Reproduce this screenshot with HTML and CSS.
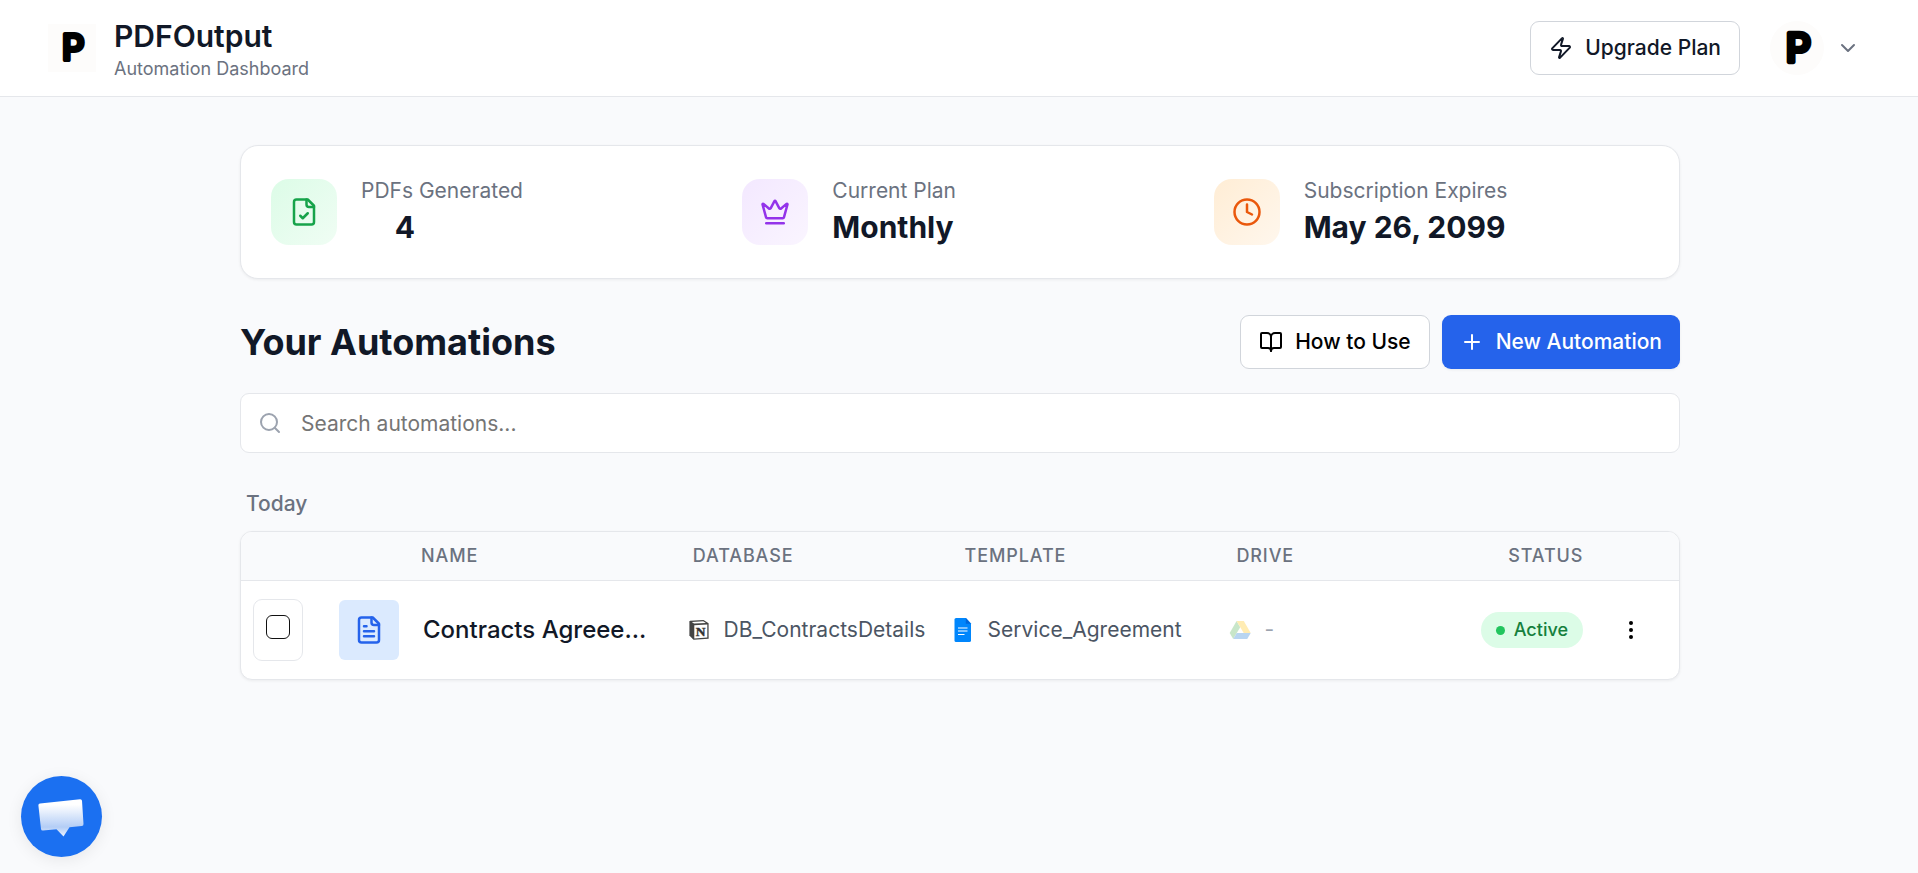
FILE: index.html
```html
<!DOCTYPE html>
<html lang="en">

<head>
    <meta charset="UTF-8">
    <meta name="viewport" content="width=device-width, initial-scale=1.0">
    <title>PDFOutput - Automation Dashboard</title>
    <link rel="stylesheet" href="styles.css">
</head>

<body>
    <header class="header">
        <div class="brand">
            <svg class="brand-logo" viewBox="0 0 48 48">
                <rect width="48" height="48" fill="#fdfcfb"/>
                <text class="logo-letter" x="14" y="36.4">P</text>
            </svg>
            <div class="brand-text">
                <div class="brand-name">PDFOutput</div>
                <div class="brand-sub">Automation Dashboard</div>
            </div>
        </div>
        <div class="account">
            <button class="btn">
                <svg class="icon" viewBox="0 0 24 24"><path d="M4 14a1 1 0 0 1-.78-1.63l9.9-10.2a.5.5 0 0 1 .86.46l-1.92 6.02A1 1 0 0 0 13 10h7a1 1 0 0 1 .78 1.63l-9.9 10.2a.5.5 0 0 1-.86-.46l1.92-6.02A1 1 0 0 0 11 14z"/></svg>
                Upgrade Plan
            </button>
            <div class="profile">
                <svg class="avatar" viewBox="0 0 48 48">
                    <rect width="48" height="48" fill="#fdfcfb"/>
                    <text class="logo-letter" x="14" y="36.4">P</text>
                </svg>
                <svg class="icon chevron" viewBox="0 0 24 24"><path d="m6 9 6 6 6-6"/></svg>
            </div>
        </div>
    </header>

    <main class="container">
        <section class="stats">
            <div class="stat">
                <div class="stat-icon green">
                    <svg class="icon" viewBox="0 0 24 24"><path d="M15 2H6a2 2 0 0 0-2 2v16a2 2 0 0 0 2 2h12a2 2 0 0 0 2-2V7Z"/><path d="M14 2v4a2 2 0 0 0 2 2h4"/><path d="m9 15 2 2 4-4"/></svg>
                </div>
                <div>
                    <div class="stat-label">PDFs Generated</div>
                    <div class="stat-value count">4</div>
                </div>
            </div>
            <div class="stat">
                <div class="stat-icon purple">
                    <svg class="icon" viewBox="0 0 24 24"><path d="M11.562 3.266a.5.5 0 0 1 .876 0L15.39 8.87a1 1 0 0 0 1.516.294L21.183 5.5a.5.5 0 0 1 .798.519l-2.834 10.246a1 1 0 0 1-.956.734H5.81a1 1 0 0 1-.957-.734L2.02 6.02a.5.5 0 0 1 .798-.519l4.276 3.664a1 1 0 0 0 1.516-.294z"/><path d="M5 21h14"/></svg>
                </div>
                <div>
                    <div class="stat-label">Current Plan</div>
                    <div class="stat-value">Monthly</div>
                </div>
            </div>
            <div class="stat">
                <div class="stat-icon orange">
                    <svg class="icon" viewBox="0 0 24 24"><circle cx="12" cy="12" r="10"/><path d="M12 6v6l4 2"/></svg>
                </div>
                <div>
                    <div class="stat-label">Subscription Expires</div>
                    <div class="stat-value">May 26, 2099</div>
                </div>
            </div>
        </section>

        <div class="title-row">
            <h1>Your Automations</h1>
            <div class="actions">
                <button class="btn btn-black">
                    <svg class="icon" viewBox="0 0 24 24"><path d="M12 7v14"/><path d="M3 18a1 1 0 0 1-1-1V4a1 1 0 0 1 1-1h5a4 4 0 0 1 4 4 4 4 0 0 1 4-4h5a1 1 0 0 1 1 1v13a1 1 0 0 1-1 1h-6a3 3 0 0 0-3 3 3 3 0 0 0-3-3z"/></svg>
                    How to Use
                </button>
                <button class="btn btn-primary">
                    <svg class="icon" viewBox="0 0 24 24"><path d="M5 12h14M12 5v14"/></svg>
                    New Automation
                </button>
            </div>
        </div>

        <label class="search">
            <svg class="icon" viewBox="0 0 24 24"><circle cx="11" cy="11" r="8"/><path d="m21 21-4.3-4.3"/></svg>
            <input type="text" placeholder="Search automations...">
        </label>

        <h2 class="group-title">Today</h2>

        <section class="table">
            <div class="table-head">
                <span>Name</span>
                <span>Database</span>
                <span>Template</span>
                <span>Drive</span>
                <span>Status</span>
            </div>
            <div class="table-row">
                <div class="check-box"><input type="checkbox"></div>
                <div class="file-icon">
                    <svg class="icon" viewBox="0 0 24 24"><path d="M15 2H6a2 2 0 0 0-2 2v16a2 2 0 0 0 2 2h12a2 2 0 0 0 2-2V7Z"/><path d="M14 2v4a2 2 0 0 0 2 2h4"/><path d="M10 9H8M16 13H8M16 17H8"/></svg>
                </div>
                <div class="name">Contracts Agreee...</div>
                <div class="cell">
                    <svg class="app-icon" viewBox="0 0 24 24">
                        <path d="M3 2.800 16.500 2 21.600 5.300V20.800L6.500 21.800 2.400 17.500V3.500Z" fill="#444"/>
                        <path d="M4.800 3.900 16.200 3.200 18.900 4.900 7 5.600Z" fill="#fff"/>
                        <path d="M7.300 7.200 20.300 6.400V19.600L7.300 20.500Z" fill="#fff"/>
                        <text class="notion-letter" x="8.800" y="18.100">N</text>
                    </svg>
                    DB_ContractsDetails
                </div>
                <div class="cell">
                    <svg class="app-icon" viewBox="0 0 24 24">
                        <path d="M5.100 0H15l5 5.500v16.900a1.600 1.600 0 0 1-1.600 1.600H5.100A1.600 1.600 0 0 1 3.500 22.400V1.600A1.600 1.600 0 0 1 5.100 0Z" fill="#0086fc"/>
                        <path d="M14.800 0l5.200 5.800h-5.200Z" fill="#0066da"/>
                        <path d="M7 10h9.500M7 13h9.500M7 16.500h6.500" stroke="#fff" stroke-width="1.100"/>
                    </svg>
                    Service_Agreement
                </div>
                <div class="cell empty">
                    <svg class="app-icon" viewBox="0 0 24 24">
                        <path d="M8.600 3 12.200 9.200 5.200 21 1.700 15Z" fill="#4caf50"/>
                        <path d="M8.600 3h7.200l6.900 12h-7Z" fill="#ffc107"/>
                        <path d="M8.700 15h14l-3.500 6H5.200Z" fill="#1976d2"/>
                    </svg>
                    -
                </div>
                <div class="status">Active</div>
                <button class="menu">
                    <svg viewBox="0 0 24 24"><circle cx="12" cy="5" r="2"/><circle cx="12" cy="12" r="2"/><circle cx="12" cy="19" r="2"/></svg>
                </button>
            </div>
        </section>
    </main>

    <button class="chat">
        <svg viewBox="0 0 81 81">
            <defs>
                <linearGradient id="bubble" x1="0" y1="0" x2="0" y2="1">
                    <stop offset="0.15" stop-color="#fff"/>
                    <stop offset="0.75" stop-color="#b3cdf6"/>
                    <stop offset="1" stop-color="#eef4fe"/>
                </linearGradient>
            </defs>
            <path d="M19 27.500 59 23.200Q60.800 23 61 24.800L62.500 48Q62.600 49.800 60.800 50L48.500 51.200 42.500 60.500 35.500 53.200 22 54.500Q20.200 54.600 20 52.900L17.400 29.500Q17.300 27.700 19 27.500Z" fill="url(#bubble)"/>
        </svg>
    </button>
</body>

</html>
```

FILE: styles.css
```css
* {
    box-sizing: border-box;
}

body {
    margin: 0;
    height: 100vh;
    overflow: hidden;
    background-color: #f9fafc;
    color: #111827;
    font-family: Inter, "Liberation Sans", sans-serif;
    font-size: 21px;
    line-height: 30px;
}

button,
input {
    font: inherit;
}

.icon {
    width: 24px;
    height: 24px;
    flex: none;
    fill: none;
    stroke: currentColor;
    stroke-width: 2;
    stroke-linecap: round;
    stroke-linejoin: round;
}

/* header */
.header {
    display: flex;
    align-items: center;
    justify-content: space-between;
    height: 97px;
    padding: 0 58px 0 48px;
    background-color: #fff;
    border-bottom: 1px solid #e5e7eb;
}

.brand {
    display: flex;
    align-items: center;
    gap: 18px;
}

.brand-logo {
    width: 48px;
    height: 48px;
}

.brand-text {
    padding-top: 4px;
}

.logo-letter {
    font-size: 35px;
    font-weight: 500;
    stroke: #000;
    stroke-width: 4;
    stroke-linejoin: round;
}

.brand-name {
    font-size: 30px;
    font-weight: 600;
    line-height: 37px;
}

.brand-sub {
    color: #6b7280;
    font-size: 18px;
    line-height: 27px;
}

.account {
    display: flex;
    align-items: center;
    gap: 30px;
}

.profile {
    display: flex;
    align-items: center;
    gap: 12px;
}

.avatar {
    width: 54px;
    height: 54px;
    border-radius: 50%;
}

.chevron {
    color: #6b7280;
}

.btn {
    display: flex;
    align-items: center;
    gap: 12px;
    height: 54px;
    padding: 0 18px;
    background-color: #fff;
    border: 1px solid #d1d5db;
    border-radius: 9px;
    color: #111827;
    font-weight: 500;
    white-space: nowrap;
}

.btn-black {
    color: #000;
}

.btn-primary {
    background-color: #2563eb;
    border: none;
    color: #fff;
    box-shadow: 0 1px 3px rgba(0, 0, 0, 0.06);
}

/* page */
.container {
    width: 1440px;
    margin: 48px 0 0 240px;
}

.stats {
    display: grid;
    grid-template-columns: repeat(3, 1fr);
    gap: 36px;
    height: 134px;
    padding: 0 30px;
    background-color: #fff;
    border: 1px solid #e5e7eb;
    border-radius: 18px;
    box-shadow: 0 1px 3px rgba(0, 0, 0, 0.06);
}

.stat {
    display: flex;
    align-items: center;
    gap: 24px;
}

.stat-icon {
    display: flex;
    align-items: center;
    justify-content: center;
    width: 66px;
    height: 66px;
    border-radius: 18px;
}

.stat-icon .icon,
.file-icon .icon {
    width: 30px;
    height: 30px;
}

.green {
    color: #16a34a;
    background: linear-gradient(to bottom right, #dcfce7, #f0fdf4);
}

.purple {
    color: #9333ea;
    background: linear-gradient(to bottom right, #f3e8ff, #faf5ff);
}

.orange {
    color: #ea580c;
    background: linear-gradient(to bottom right, #ffedd5, #fff7ed);
}

.stat-label {
    color: #6b7280;
}

.stat-value {
    font-size: 30px;
    font-weight: 700;
    line-height: 42px;
}

.count {
    width: 88px;
    text-align: center;
}

.title-row {
    display: flex;
    align-items: center;
    justify-content: space-between;
    margin-top: 36px;
}

h1 {
    margin: 0;
    font-size: 36px;
    font-weight: 700;
    line-height: 48px;
}

.actions {
    display: flex;
    gap: 12px;
}

.search {
    display: flex;
    align-items: center;
    gap: 19px;
    height: 60px;
    margin-top: 24px;
    padding: 0 17px;
    background-color: #fff;
    border: 1px solid #e5e7eb;
    border-radius: 9px;
}

.search .icon {
    color: #9ca3af;
}

.search input {
    flex: 1;
    padding: 1px 0 0;
    border: none;
    outline: none;
}

.search input::placeholder {
    color: #757575;
}

.group-title {
    margin: 36px 0 12px 6px;
    color: #6b7280;
    font-size: 21px;
    font-weight: 500;
    line-height: 30px;
}

/* automations table */
.table {
    background-color: #fff;
    border: 1px solid #e5e7eb;
    border-radius: 12px;
    overflow: hidden;
    box-shadow: 0 1px 3px rgba(0, 0, 0, 0.06);
}

.table-head {
    display: grid;
    grid-template-columns: repeat(4, 271.8px) 1fr;
    align-items: center;
    height: 49px;
    padding-left: 180px;
    background-color: #f9fafc;
    border-bottom: 1px solid #e5e7eb;
    color: #6b7280;
    font-size: 18px;
    font-weight: 500;
    letter-spacing: 0.9px;
    text-transform: uppercase;
}

.table-row {
    display: grid;
    grid-template-columns: 86px 84px 264px 264px 277px 1fr auto 73px;
    align-items: center;
    height: 98px;
    padding: 0 23px 0 12px;
}

.check-box {
    width: 50px;
    height: 62px;
    padding: 15px 12px;
    border: 1px solid #e5e7eb;
    border-radius: 9px;
}

.check-box input {
    display: block;
    appearance: none;
    width: 24px;
    height: 24px;
    margin: 0;
    border: 1px solid #111;
    border-radius: 6px;
}

.file-icon {
    display: flex;
    align-items: center;
    justify-content: center;
    width: 60px;
    height: 60px;
    background-color: #dbeafe;
    border-radius: 6px;
    color: #2563eb;
}

.name {
    font-size: 24px;
    font-weight: 500;
    white-space: nowrap;
}

.cell {
    display: flex;
    align-items: center;
    gap: 12.6px;
    color: #4b5563;
    white-space: nowrap;
}

.app-icon {
    width: 24px;
    height: 24px;
    flex: none;
}

.notion-letter {
    fill: #333;
    stroke: #333;
    stroke-width: 0.4;
    font-family: "Liberation Serif", serif;
    font-size: 13.5px;
    font-weight: 700;
}

.empty {
    color: #9ca3af;
}

.empty .app-icon {
    opacity: 0.3;
}

.status {
    display: flex;
    align-items: center;
    gap: 9px;
    height: 36px;
    padding: 0 15px;
    background-color: #dcfce7;
    border-radius: 18px;
    color: #15803d;
    font-size: 18px;
    font-weight: 500;
}

.status::before {
    content: "";
    width: 9px;
    height: 9px;
    border-radius: 50%;
    background-color: #22c55e;
}

.menu {
    justify-self: end;
    width: 50px;
    height: 48px;
    padding: 0;
    background: none;
    border: none;
}

.menu svg {
    display: block;
    width: 24px;
    height: 24px;
    margin: 0 auto;
}

/* chat launcher floats above the page */
.chat {
    position: fixed;
    left: 21px;
    bottom: 16px;
    width: 81px;
    height: 81px;
    padding: 0;
    background-color: #1b70f1;
    border: none;
    border-radius: 50%;
    box-shadow: 0 3px 16px rgba(0, 0, 0, 0.08);
}

.chat svg {
    display: block;
}
```
